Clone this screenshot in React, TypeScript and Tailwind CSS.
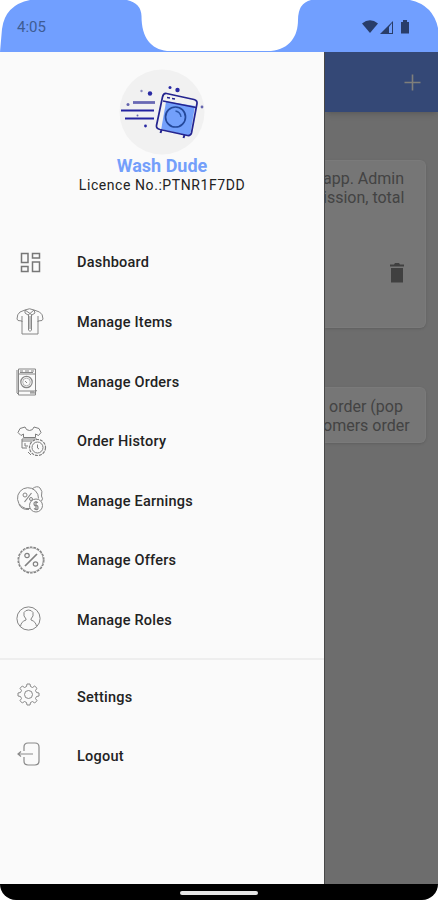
import React from 'react'

const DashboardIcon = () => (
  <svg className="ml-[20px] w-[21px] h-[21px]" viewBox="0 0 21 21" fill="none" stroke="#777" strokeWidth="1.5">
    <rect x="1.5" y="1.5" width="6.5" height="9" />
    <rect x="12.5" y="1.5" width="7" height="4.5" />
    <rect x="1.5" y="14.5" width="6.5" height="5" />
    <rect x="12.5" y="10" width="7" height="9.5" />
  </svg>
)

const ShirtIcon = () => (
  <svg className="ml-[16px] w-[28px] h-[28px]" viewBox="0 0 28 28" fill="none" stroke="#868686" strokeWidth="1">
    <path d="M9 2 4 4Q1 6 1 11l1 1.500 4 .5V26H22V13l4-.5 1-1.500Q27 6 23.500 4L18 2" />
    <path d="M6 8v6M22 8v6M9 2Q13.500 -.5 18 2L14 5.500ZM9 2v3l3 2 2-1.500 2 1.500 3-2-1-3M12.500 7v15l1.500 1.500 1.500-1.500V7M14 8v13" />
  </svg>
)

const WasherIcon = () => (
  <svg className="ml-[16px] w-[22px] h-[28px]" viewBox="0 0 22 28" fill="none" stroke="#868686" strokeWidth="1">
    <path d="M2.500 1h17v26h-17ZM1 2v23l2 2M3 6h16M3 23h16M14 25h5l1.500-3" />
    <path d="M4 3h3M9 3h4M15 3h3M4 4.500h13" strokeWidth="1.200" />
    <circle cx="10.500" cy="14" r="5.700" strokeWidth="1.200" />
    <circle cx="10.500" cy="14" r="3.800" strokeWidth=".6" />
    <path d="m9 13 2 2M14 24h4" />
  </svg>
)

const HistoryIcon = () => (
  <svg className="ml-[17px] w-[30px] h-[31px]" viewBox="0 0 30 31" fill="none" stroke="#7d7d7d" strokeWidth="1">
    <path d="M8 1 3 2.500 1 6.500l3 3L6.500 8v3.500h12V8l3 1.500 2.500-3-2-4L17 1Q16 4.500 12.500 4.500T8 1Z" />
    <path d="M5 13h15M5 15h10M5 13v9h5M8 17v3h3" />
    <circle cx="20.500" cy="21.500" r="8" fill="#fafafa" strokeWidth="1.200" strokeDasharray="3 1" />
    <circle cx="20.500" cy="21.500" r="5.500" />
    <path d="M20.500 18.500v3.500l1.500 1M11 26l3 3" />
  </svg>
)

const EarningsIcon = () => (
  <svg className="ml-[17px] mb-[3px] w-[27px] h-[27px]" viewBox="0 0 27 27" fill="none" stroke="#868686" strokeWidth="1">
    <path d="M13 22.500A10.500 10.500 0 1 1 21.500 12.500M15 3q5-4 8-1t1.500 8q2 3 0 5M2 18q2 6 10 5.500" />
    <circle cx="19" cy="19.500" r="6.500" />
    <path d="m14.500 7-7 9M21 16.500q-4-1.500-4 1t2 2 2 2.500-4 .5M19 15v9" strokeWidth="1.200" />
    <circle cx="8" cy="9" r="2" />
    <circle cx="14" cy="13" r="1.500" />
  </svg>
)

const OffersIcon = () => (
  <svg className="ml-[17px] w-[28px] h-[28px]" viewBox="0 0 28 28" fill="none" stroke="#808080">
    <circle cx="14" cy="14" r="12.900" strokeWidth="1.300" strokeDasharray="2.600 1.100" />
    <circle cx="14" cy="14" r="12.200" strokeWidth=".6" />
    <path d="m20 8-12 12" strokeWidth="1.700" />
    <circle cx="10" cy="9.500" r="2.200" strokeWidth="1.200" />
    <circle cx="18.500" cy="18" r="2.200" strokeWidth="1.200" />
  </svg>
)

const RolesIcon = () => (
  <svg className="ml-[16px] mb-[3px] w-[25px] h-[25px]" viewBox="0 0 25 25" fill="none" stroke="#858585" strokeWidth="1">
    <circle cx="12.500" cy="12.500" r="11.600" />
    <path d="M4.500 20.500q.5-5 5.500-6.500v-1Q7 10 8 6.500 9.500 4 12.500 4T17 6.500Q18 10 15 13v1q5 1.500 5.500 6.500" />
  </svg>
)

const SettingsIcon = () => (
  <svg className="ml-[17px] mb-[4px] w-[23px] h-[23px]" viewBox="0 0 23 23" fill="none" stroke="#888" strokeWidth="1">
    <path d="M9.500 3.500 10 1h3l.5 2.500 2 1 2.200-1.500 2.300 2.300L18.500 7.500l1 2L22 10v3l-2.500.5-1 2 1.500 2.200-2.300 2.300-2.200-1.500-2 1L13 22h-3l-.5-2.500-2-1L5.300 20 3 17.700l1.500-2.200-1-2L1 13v-3l2.500-.5 1-2L3 5.300 5.300 3l2.200 1.500Z" strokeLinejoin="round" />
    <circle cx="11.500" cy="11.500" r="4" />
  </svg>
)

const LogoutIcon = () => (
  <svg className="ml-[17px] mb-[4px] w-[24px] h-[25px]" viewBox="0 0 24 25" fill="none" stroke="#8a8a8a" strokeWidth="1.200">
    <path d="M7 9V5q0-4 4-4h7q4 0 4 4v14q0 4-4 4h-7q-4 0-4-4v-4" />
    <path d="M1 12h15M4 9.500 1 12l3 2.500" />
  </svg>
)

const Logo = () => (
  <svg className="w-[86px] h-[86px]" viewBox="0 0 86 86" fill="none">
    <circle cx="43" cy="43" r="42.500" fill="#f1f1f1" />
    <g stroke="#2424a0" strokeWidth="2.200">
      <path d="M14 33.500h22" stroke="#6969b4" strokeWidth="2.800" />
      <path d="M2 41.500h33M6 49.500h29" />
    </g>
    <g fill="#2929a3">
      <circle cx="31" cy="24.500" r="2.200" />
      <circle cx="58.500" cy="21" r="2.200" />
      <circle cx="51" cy="18.500" r="1.500" />
      <circle cx="22.500" cy="22" r="1.200" fill="#8989be" />
      <circle cx="9" cy="35.500" r="1.500" fill="#6464ae" />
      <circle cx="18.500" cy="46.500" r="1" fill="#6464ae" />
      <circle cx="26.500" cy="57" r="1.400" />
      <circle cx="83" cy="38" r="1.400" fill="#6464ae" />
    </g>
    <path d="m45 32 31 5-5 30-29-7Z" fill="#73a0fb" />
    <path d="m43 26 4 7-5 28-4-3Z" fill="#f1f1f1" />
    <path d="M47.500 24.500 75 30.500q3.500 1 3 4L72.500 64q-1 3-4 2.500L41 60.500q-4-1-3.500-4L43.500 28q1-4 4-3.500Z" stroke="#24248f" strokeWidth="1.700" />
    <path d="m44 32 33 6.500M48 28.500l3 .5M53 29.500l3 .5" stroke="#24248f" strokeWidth="1.500" />
    <circle cx="56.500" cy="48" r="10" stroke="#24489a" strokeWidth="1.700" />
    <path d="M56.500 42q5 1 5.500 6" stroke="#2c57aa" strokeWidth="1.300" />
    <path d="m42.500 61-1 3M65.500 66l-1 3" stroke="#24248f" strokeWidth="2" />
  </svg>
)

const StatusBar = () => (
  <div className="relative h-[52px] shrink-0">
    <svg className="absolute inset-0 w-[438px] h-[52px]" viewBox="0 0 438 52">
      <path d="M0 52 2 29Q5 5 30 0H127Q141 3 141.500 16C141.500 38 151 49 167 51H271C290 49 298 36 298 20Q298 3 311 0H410Q433 5 438 28V52Z" fill="#719fff" />
    </svg>
    <div className="relative flex h-full items-center justify-between pt-[2px] pl-[17px] pr-[28px]">
      <span className="text-[15px] leading-none text-[#3e5c94]">4:05</span>
      <svg className="w-[48px] h-[16px]" viewBox="0 0 48 16" fill="#293d69">
        <path d="M0 4.500Q8 -2 16 4.500L8 14Z" />
        <path d="M18 15 31 2v13Z" />
        <path d="M27 8v6h3V4Z" fill="#719fff" />
        <path d="M39 3h2V1h4v2h2v11.500h-8Z" />
      </svg>
    </div>
  </div>
)

const menu = [
  { label: 'Dashboard', icon: <DashboardIcon /> },
  { label: 'Manage Items', icon: <ShirtIcon /> },
  { label: 'Manage Orders', icon: <WasherIcon /> },
  { label: 'Order History', icon: <HistoryIcon /> },
  { label: 'Manage Earnings', icon: <EarningsIcon /> },
  { label: 'Manage Offers', icon: <OffersIcon /> },
  { label: 'Manage Roles', icon: <RolesIcon /> },
]

const account = [
  { label: 'Settings', icon: <SettingsIcon /> },
  { label: 'Logout', icon: <LogoutIcon /> },
]

const MenuItem = ({ label, icon }: { label: string; icon: React.ReactNode }) => (
  <li className="flex h-[59.6px] items-center">
    <div className="w-[77px] shrink-0 pb-[2px]">{icon}</div>
    <span className="text-[14.5px] font-medium leading-5 tracking-[0.22px] text-[#222]">{label}</span>
  </li>
)

const Drawer = () => (
  <aside className="w-[324px] shrink-0 bg-[#fafafa]">
    <div className="flex h-[181.6px] flex-col items-center pt-[17px]">
      <Logo />
      <h1 className="mt-px text-[18px] font-bold leading-5 text-[#749ffa]">Wash Dude</h1>
      <p className="text-[14px] leading-[19px] tracking-[0.57px] text-[#222]">Licence No.:PTNR1F7DD</p>
    </div>
    <ul>
      {menu.map((item) => (
        <MenuItem key={item.label} {...item} />
      ))}
    </ul>
    <div className="mt-[7px] mb-[8px] h-[2px] bg-[#eee]"></div>
    <ul>
      {account.map((item) => (
        <MenuItem key={item.label} {...item} />
      ))}
    </ul>
  </aside>
)

const Page = () => (
  <main className="w-[114px] shrink-0 overflow-hidden border-l border-[#484848] bg-[#6d6d6d] text-[16px] leading-[19px] text-[#434343]">
    <div className="flex h-[60px] items-center justify-end bg-[#344876] pr-[17px] shadow-md">
      <svg className="w-[17px] h-[17px]" viewBox="0 0 17 17" stroke="#7f7f7b" strokeWidth="1.6">
        <path d="M8.500 .5v16M.5 8.500h16" />
      </svg>
    </div>
    <div className="mt-[48px] mr-[12px] h-[168px] rounded-r-[6px] border border-l-0 border-[#7a7a7a] bg-[#767676] pt-[8px] shadow-sm">
      <p className="-ml-[2px] whitespace-nowrap">app. Admin<br />ission, total</p>
      <svg className="mt-[56px] ml-[64px] w-[16px] h-[20px]" viewBox="0 0 16 20" fill="#404040">
        <path d="M1 1.500h4L6 0h4l1 1.500h4v2H1ZM2 5h12v14.500H2Z" />
      </svg>
    </div>
    <div className="mt-[59px] mr-[12px] h-[56px] rounded-r-[6px] border border-l-0 border-[#7a7a7a] bg-[#767676] pt-[9px] shadow-sm">
      <p className="-ml-[2px] whitespace-nowrap"><span className="ml-[6px]">order (pop</span><br />omers order</p>
    </div>
  </main>
)

const App = () => {
  return (
    <div className="flex h-[900px] w-[438px] flex-col overflow-hidden bg-white font-[Roboto,sans-serif]">
      <StatusBar />
      <div className="flex h-[832px]">
        <Drawer />
        <Page />
      </div>
      <div className="flex h-[16px] justify-center rounded-b-[17px] bg-black pt-[7px]">
        <div className="h-[4px] w-[78px] rounded-full bg-[#e6e6e6]"></div>
      </div>
    </div>
  )
}

export default App
